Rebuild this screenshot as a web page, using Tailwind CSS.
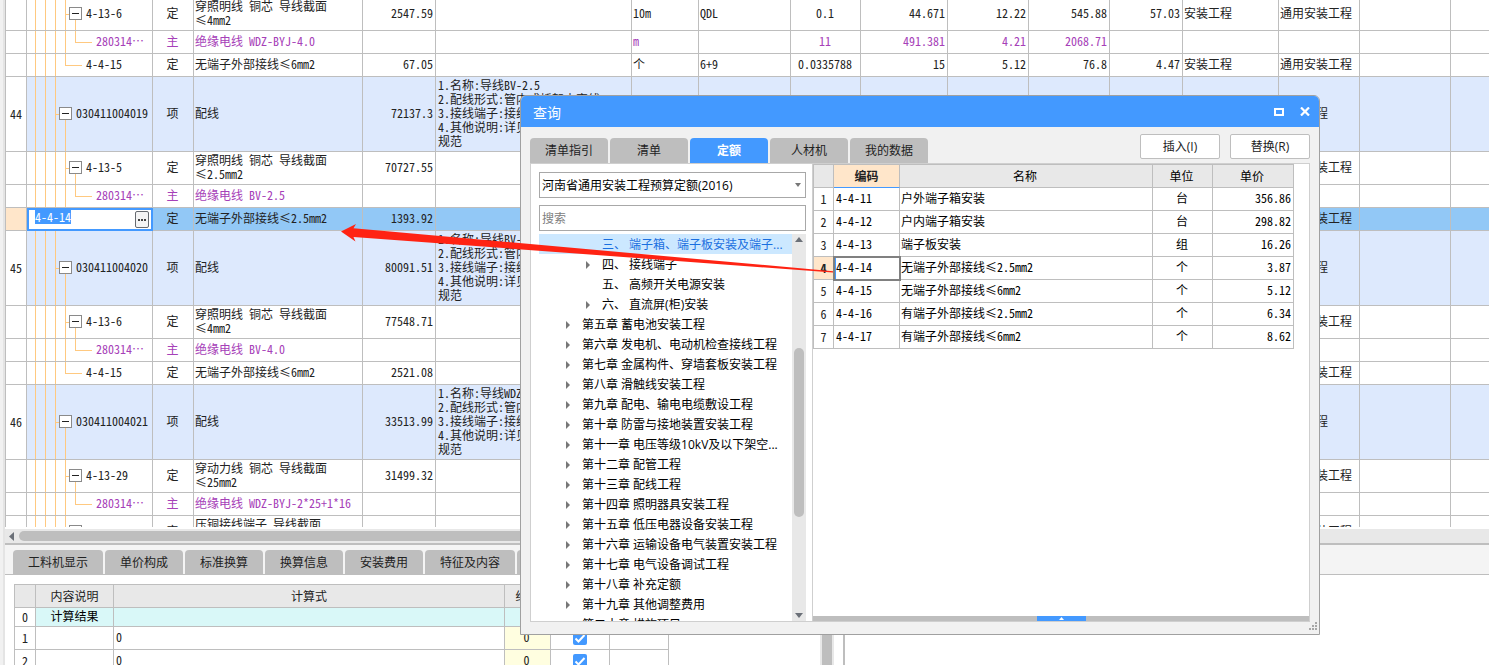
<!DOCTYPE html>
<html lang="zh-CN">
<head>
<meta charset="utf-8">
<title>查询</title>
<script src="https://cdn.jsdelivr.net/npm/@tailwindcss/browser@4"></script>
</head>
<body class="relative h-screen overflow-hidden bg-[#f1f1f1] font-['Open_Sans','Noto_Sans_CJK_SC',sans-serif] text-xs text-[#222222]">

<div class="flex h-full flex-col border-l-[3px] border-[#f1f1f1] bg-white">
  <div class="flex min-h-0 flex-1 flex-col border-l-2 border-[#e4e4e4]">

    <!-- bill of quantities grid -->
    <main class="h-[527px] shrink-0 overflow-hidden">
      <table class="-mt-[2px] w-full table-fixed border-separate border-spacing-0 border-l border-[#bebebe] font-['Noto_Sans_Mono_CJK_SC','Noto_Sans_CJK_SC',monospace] text-xs leading-[14px] whitespace-nowrap">
        <colgroup>
          <col class="w-[21px]"><col class="w-[126px]"><col class="w-[41px]"><col class="w-[169px]"><col class="w-[73px]"><col class="w-[196px]"><col class="w-[67px]"><col class="w-[92px]"><col class="w-[70px]"><col class="w-[87px]"><col class="w-[81px]"><col class="w-[81px]"><col class="w-[73px]"><col class="w-[96px]"><col class="w-[81px]"><col class="w-[91px]"><col>
        </colgroup>
        <tbody id="bill"></tbody>
      </table>
    </main>

    <!-- horizontal scrollbar -->
    <div class="mt-[2px] flex h-[14px] shrink-0 items-center bg-[#e8e8e8]">
      <svg class="ml-[4px] h-[9px] w-[5px]" viewBox="0 0 5 9"><path d="M5 0v9L0 4.500z" fill="#6b7078"/></svg>
      <div class="ml-[5px] h-[10px] w-3/5 rounded-full bg-[#bebebe]"></div>
    </div>
    <div class="h-[2px] shrink-0 bg-[#bebebe]"></div>

    <nav class="flex h-[30px] shrink-0 items-end gap-[2px] border-b border-[#bebebe] bg-[#f4f4f4] pl-[8px]">
      <button class="h-[24px] w-[90px] rounded-t-sm bg-[#bebebe] pt-[2px]">工料机显示</button>
      <button class="h-[24px] w-[78px] rounded-t-sm bg-[#bebebe] pt-[2px]">单价构成</button>
      <button class="h-[24px] w-[78px] rounded-t-sm bg-[#bebebe] pt-[2px]">标准换算</button>
      <button class="h-[24px] w-[78px] rounded-t-sm bg-[#bebebe] pt-[2px]">换算信息</button>
      <button class="h-[24px] w-[78px] rounded-t-sm bg-[#bebebe] pt-[2px]">安装费用</button>
      <button class="h-[24px] w-[90px] rounded-t-sm bg-[#bebebe] pt-[2px]">特征及内容</button>
      <button aria-label="工程量明细" class="h-[24px] w-[90px] rounded-t-sm bg-[#bebebe]"></button>
    </nav>

    <section class="flex min-h-0 flex-1 overflow-hidden">
      <div class="w-[815px] shrink-0 pt-[9px] pl-[9px]">
        <table class="w-[655px] table-fixed border-separate border-spacing-0 border-t border-l border-[#bebebe] font-['Noto_Sans_Mono_CJK_SC','Noto_Sans_CJK_SC',monospace] leading-[14px]">
          <colgroup><col class="w-[21px]"><col class="w-[78px]"><col class="w-[391px]"><col class="w-[46px]"><col class="w-[59px]"><col class="w-[59px]"></colgroup>
          <thead>
            <tr class="h-[23px] bg-[#e8e8e8]">
              <th class="border-r border-b border-[#bebebe]"></th>
              <th class="border-r border-b border-[#bebebe] p-0 font-normal">内容说明</th>
              <th class="border-r border-b border-[#bebebe] p-0 font-normal">计算式</th>
              <th class="border-r border-b border-[#bebebe] p-0 font-normal">结果</th>
              <th class="border-r border-b border-[#bebebe]"></th>
              <th class="border-r border-b border-[#bebebe]"></th>
            </tr>
          </thead>
          <tbody>
            <tr class="h-[19px] bg-[#d9f8f8]">
              <td class="border-r border-b border-[#bebebe] bg-white p-0 text-center">0</td>
              <td class="border-r border-b border-[#bebebe] p-0 pb-[2px] text-center text-black">计算结果</td>
              <td class="border-r border-b border-[#bebebe]"></td><td class="border-r border-b border-[#bebebe]"></td><td class="border-r border-b border-[#bebebe]"></td><td class="border-r border-b border-[#bebebe]"></td>
            </tr>
            <tr class="h-[23px]">
              <td class="border-r border-b border-[#bebebe] p-0 text-center">1</td>
              <td class="border-r border-b border-[#bebebe]"></td>
              <td class="border-r border-b border-[#bebebe] p-0 pb-[2px] pl-[2px]">0</td>
              <td class="border-r border-b border-[#bebebe] bg-[#fffee0] p-0 pr-[2px] pb-[2px] text-center">0</td>
              <td class="border-r border-b border-[#bebebe] p-0"><div class="mx-auto grid size-[14px]"><input type="checkbox" checked aria-label="选项 1" class="col-start-1 row-start-1 size-[14px] appearance-none rounded-xs bg-[#4399ff]"><svg class="pointer-events-none col-start-1 row-start-1 size-[14px]" viewBox="0 0 14 14"><path d="M2.500 7.500l3 3 6-6.500" fill="none" stroke="#fff" stroke-width="2"/></svg></div></td>
              <td class="border-r border-b border-[#bebebe]"></td>
            </tr>
            <tr class="h-[23px]">
              <td class="border-r border-b border-[#bebebe] p-0 text-center">2</td>
              <td class="border-r border-b border-[#bebebe]"></td>
              <td class="border-r border-b border-[#bebebe] p-0 pb-[2px] pl-[2px]">0</td>
              <td class="border-r border-b border-[#bebebe] bg-[#fffee0] p-0 pr-[2px] pb-[2px] text-center">0</td>
              <td class="border-r border-b border-[#bebebe] p-0"><div class="mx-auto grid size-[14px]"><input type="checkbox" checked aria-label="选项 2" class="col-start-1 row-start-1 size-[14px] appearance-none rounded-xs bg-[#4399ff]"><svg class="pointer-events-none col-start-1 row-start-1 size-[14px]" viewBox="0 0 14 14"><path d="M2.500 7.500l3 3 6-6.500" fill="none" stroke="#fff" stroke-width="2"/></svg></div></td>
              <td class="border-r border-b border-[#bebebe]"></td>
            </tr>
          </tbody>
        </table>
      </div>
      <div class="w-[14px] shrink-0 bg-[#e8e8e8] px-[2px]"><div class="h-full bg-[#bebebe]"></div></div>
      <div class="ml-[9px] w-[2px] shrink-0 bg-[#bebebe]"></div>
    </section>
  </div>
</div>

<!-- query dialog -->
<div role="dialog" aria-label="查询" class="absolute top-[95px] left-[520px] flex h-[540px] w-[800px] flex-col overflow-hidden rounded-t-md border border-[#a0a0a0] bg-[#f1f1f1]">
  <header class="flex h-[31px] shrink-0 items-center bg-[#4399ff] pr-[9px] pl-[12px] text-white">
    <h1 class="flex-1 pt-[2px] text-sm">查询</h1>
    <button aria-label="最大化" class="mr-[16px]"><svg class="h-[8px] w-[10px]" viewBox="0 0 10 8"><path d="M1 1h8v6H1z" fill="none" stroke="#fff" stroke-width="2"/></svg></button>
    <button aria-label="关闭"><svg class="h-[9px] w-[10px]" viewBox="0 0 10 9"><path d="M1 .5l8 8M9 .5l-8 8" stroke="#fff" stroke-width="2.200"/></svg></button>
  </header>
  <div class="flex h-[36px] shrink-0 items-end gap-[2px] px-[9px]">
    <button class="h-[25px] w-[78px] rounded-t-sm bg-[#bebebe]">清单指引</button>
    <button class="h-[25px] w-[78px] rounded-t-sm bg-[#bebebe]">清单</button>
    <button class="h-[25px] w-[78px] rounded-t-sm bg-[#4399ff] font-bold text-white">定额</button>
    <button class="h-[25px] w-[78px] rounded-t-sm bg-[#bebebe]">人材机</button>
    <button class="h-[25px] w-[78px] rounded-t-sm bg-[#bebebe]">我的数据</button>
    <div class="mb-[4px] ml-auto flex gap-[10px]">
      <button class="h-[25px] w-[80px] rounded-xs border border-[#bebebe] bg-white">插入(I)</button>
      <button class="h-[25px] w-[80px] rounded-xs border border-[#bebebe] bg-white">替换(R)</button>
    </div>
  </div>

  <div class="mx-[9px] mb-[12px] flex min-h-0 flex-1 border border-[#cfcfcf] bg-white text-black">
    <div class="flex w-[281px] shrink-0 flex-col pt-[8px] pr-[6px] pl-[8px]">
      <div class="relative">
        <select aria-label="定额库" class="block h-[26px] w-full appearance-none border border-[#a8a8a8] bg-white pt-[2px] pl-[2px]"><option>河南省通用安装工程预算定额(2016)</option></select>
        <svg class="pointer-events-none absolute top-[11px] right-[5px] h-[4px] w-[6px]" viewBox="0 0 6 4"><path d="M0 0h6L3 4z" fill="#777"/></svg>
      </div>
      <input type="search" placeholder="搜索" aria-label="搜索" class="mt-[7px] block h-[26px] w-full border border-[#a8a8a8] bg-white pl-[2px] placeholder:text-[#808080]">
      <div class="mt-[3px] flex min-h-0 flex-1">
        <ul id="tree" role="tree" class="min-w-0 flex-1 overflow-hidden leading-[18px] whitespace-nowrap"></ul>
        <div class="flex w-[14px] shrink-0 flex-col items-center justify-between bg-[#e8e8e8] py-[3px]">
          <svg class="h-[5px] w-[8px]" viewBox="0 0 8 5"><path d="M0 5h8L4 0z" fill="#6b7078"/></svg>
          <div class="mt-[9px] h-[169px] w-[10px] rounded-full bg-[#bebebe]"></div>
          <svg class="h-[5px] w-[8px]" viewBox="0 0 8 5"><path d="M0 0h8L4 5z" fill="#6b7078"/></svg>
        </div>
      </div>
    </div>

    <div class="flex min-w-0 flex-1 flex-col border-l border-[#cfcfcf]">
      <div class="flex-1 pr-[15px]">
        <table class="w-full table-fixed border-separate border-spacing-0 border-t border-l border-[#bebebe] font-['Noto_Sans_Mono_CJK_SC','Noto_Sans_CJK_SC',monospace] leading-[14px] whitespace-nowrap">
          <colgroup><col class="w-[20px]"><col class="w-[66px]"><col><col class="w-[60px]"><col class="w-[81px]"></colgroup>
          <thead>
            <tr class="h-[23px] bg-[#e8e8e8]">
              <th class="border-r border-b border-[#bebebe]"></th>
              <th class="border-r border-b border-r-[#bebebe] border-b-[#4399ff] bg-[#ffe6ca] p-0 font-bold text-[#222222]">编码</th>
              <th class="border-r border-b border-[#bebebe] p-0 pr-[2px] font-normal">名称</th>
              <th class="border-r border-b border-[#bebebe] p-0 pr-[2px] font-normal">单位</th>
              <th class="border-r border-b border-[#bebebe] p-0 pr-[2px] font-normal">单价</th>
            </tr>
          </thead>
          <tbody id="quota"></tbody>
        </table>
      </div>
      <div class="flex h-[5px] shrink-0 justify-center bg-[#bebebe]">
        <button aria-label="展开" class="flex w-[49px] items-center justify-center bg-[#4399ff]"><svg class="h-[3px] w-[5px]" viewBox="0 0 5 3"><path d="M0 3h5L2.500 0z" fill="#fff"/></svg></button>
      </div>
    </div>
  </div>
  <svg class="absolute right-[2px] bottom-[4px] size-[8px]" viewBox="0 0 8 8"><path d="M6 0h2v2H6zM3 3h2v2H3zM6 3h2v2H6zM0 6h2v2H0zM3 6h2v2H3zM6 6h2v2H6z" fill="#a8a8a8"/></svg>
</div>

<!-- annotation arrow -->
<svg class="pointer-events-none absolute top-[220px] left-[340px] h-[60px] w-[500px]" viewBox="340 220 500 60"><path d="M341 231.500L356 224 353.500 228.200 833 271.200V272.500L353.500 237 355.500 241.500z" fill="#ff2313"/></svg>

<script>
const cell = 'overflow-hidden border-r border-b border-[#bebebe] p-0 px-[2px] pb-[2px]';
const tight = 'overflow-hidden border-r border-b border-[#bebebe] p-0 pr-[2px] pb-[2px] pl-px';
const plain = 'h-[23px]', tall = 'h-[33px]', item = 'h-[75px] bg-[#dde9fd]', active = 'h-[23px] bg-[#92c8f6]';
const wire = '穿照明线 铜芯 导线截面<br>';
const note = (w) => `1.名称:导线${w}<br>2.配线形式:管内或桥架内穿线<br>3.接线端子:接线<br>4.其他说明:详见<br>规范`;

// [row number, kind, code, category, name, quantity, description, unit, expression, content, amount, price, total, rate, major, profession]
const rows = [
  ['', 'parent', '4-13-6', '定', wire + '≤4mm2', '2547.59', '', '10m', 'QDL', '0.1', '44.671', '12.22', '545.88', '57.03', '安装工程', '通用安装工程'],
  ['', 'leaf', '280314⋯', '主', '绝缘电线 WDZ-BYJ-4.0', '', '', 'm', '', '11', '491.381', '4.21', '2068.71', '', '', ''],
  ['', 'last', '4-4-15', '定', '无端子外部接线≤6mm2', '67.05', '', '个', '6+9', '0.0335788', '15', '5.12', '76.8', '4.47', '安装工程', '通用安装工程'],
  ['44', 'item', '030411004019', '项', '配线', '72137.3', note('BV-2.5'), '', '', '', '', '', '', '', '', '安装工程'],
  ['', 'parent', '4-13-5', '定', wire + '≤2.5mm2', '70727.55', '', '', '', '', '', '', '', '', '', '通用安装工程'],
  ['', 'leaf', '280314⋯', '主', '绝缘电线 BV-2.5', '', '', '', '', '', '', '', '', '', '', ''],
  ['', 'edit', '4-4-14', '定', '无端子外部接线≤2.5mm2', '1393.92', '', '', '', '', '', '', '', '', '', '通用安装工程'],
  ['45', 'item', '030411004020', '项', '配线', '80091.51', note('BV-4.0'), '', '', '', '', '', '', '', '', '安装工程'],
  ['', 'parent', '4-13-6', '定', wire + '≤4mm2', '77548.71', '', '', '', '', '', '', '', '', '', '通用安装工程'],
  ['', 'leaf', '280314⋯', '主', '绝缘电线 BV-4.0', '', '', '', '', '', '', '', '', '', '', ''],
  ['', 'last', '4-4-15', '定', '无端子外部接线≤6mm2', '2521.08', '', '', '', '', '', '', '', '', '', '通用安装工程'],
  ['46', 'item', '030411004021', '项', '配线', '33513.99', note('WDZ-BYJ'), '', '', '', '', '', '', '', '', '安装工程'],
  ['', 'parent', '4-13-29', '定', '穿动力线 铜芯 导线截面<br>≤25mm2', '31499.32', '', '', '', '', '', '', '', '', '', '通用安装工程'],
  ['', 'leaf', '280314⋯', '主', '绝缘电线 WDZ-BYJ-2*25+1*16', '', '', '', '', '', '', '', '', '', '', ''],
  ['', 'parent', '', '定', '压铜接线端子 导线截面<br>&nbsp;', '', '', '', '', '', '', '', '', '', '', '通用安装工程'],
];
const v = (x, y, h) => `<rect x="${x}" y="${y}" width="1" height="${h}"/>`;
const hz = (x, w) => `<rect x="${x}" y="50%" width="${w}" height="1"/>`;
const guides = {
  item: v(38, '50%', '50%') + hz(28, 5),
  parent: v(38, 0, '100%') + hz(38, 5) + v(48, '50%', '50%'),
  leaf: v(38, 0, '100%') + v(48, 0, '50%') + hz(48, 17),
  last: v(38, 0, '50%') + hz(38, 17),
};
const indent = { item: 'pl-[32px]', parent: 'pl-[42px]', leaf: 'pl-[69px]', last: 'pl-[59px]' };
const toggle = '<button aria-label="折叠" class="mr-[4px] flex size-[13px] shrink-0 items-center justify-center border border-[#8a8a8a] bg-white"><span class="h-px w-[7px] bg-[#222222]"></span></button>';

function codeCell(kind, code) {
  if (kind === 'edit') return `<td class="border-r border-b border-[#4399ff] bg-white p-0"><div class="flex h-[22px] justify-between border-2 border-r border-b border-[#4399ff] pr-[2px] pl-[6px]"><input aria-label="编码" value="${code}" class="h-[14px] w-[36px] bg-[#4399ff] text-white outline-none"><button aria-label="选择" class="mt-px flex h-[17px] w-[14px] items-center justify-center gap-px rounded-xs border border-[#666a70] bg-[#f4f4f4]"><span class="size-[2px] bg-[#444444]"></span><span class="size-[2px] bg-[#444444]"></span><span class="size-[2px] bg-[#444444]"></span></button></div></td>`;
  const box = kind === 'item' || kind === 'parent' ? toggle : '';
  return `<td class="relative border-r border-b border-[#bebebe] p-0 pb-[2px]"><svg class="absolute inset-0 size-full" fill="#ffc980">${v(8, 0, '100%')}${v(18, 0, '100%')}${v(28, 0, '100%')}${guides[kind]}</svg><div class="relative flex items-center ${indent[kind]}">${box}${code}</div></td>`;
}
document.getElementById('bill').innerHTML = rows.map(r => {
  const [no, kind, code, cat, name, qty, desc, ...rest] = r;
  const tr = kind === 'item' ? item : kind === 'parent' ? tall : kind === 'edit' ? active : plain;
  const ink = kind === 'leaf' ? 'text-[#a640b8]' : '';
  const align = ['text-left', 'text-left', 'text-center', 'text-right', 'text-right', 'text-right', 'text-right', 'text-left', 'text-left'];
  return `<tr class="${tr} ${ink}">
    <td class="border-r border-b border-[#bebebe] p-0 text-center ${kind === 'edit' ? 'bg-[#ffe6ca]' : 'bg-white'}">${no}</td>
    ${codeCell(kind, code)}
    <td class="${tight} text-center">${cat}</td><td class="${tight}">${name}</td><td class="${cell} text-right">${qty}</td><td class="${cell}">${desc}</td>
    ${rest.map((t, i) => `<td class="${tight} ${align[i]}">${t}</td>`).join('')}
    <td class="${cell}"></td><td class="border-b border-[#bebebe]"></td></tr>`;
}).join('');

const tree = [
  ['sel', '三、 端子箱、端子板安装及端子...'], ['sub', '四、 接线端子'], ['end', '五、 高频开关电源安装'], ['sub', '六、 直流屏(柜)安装'],
  ['top', '第五章 蓄电池安装工程'], ['top', '第六章 发电机、电动机检查接线工程'], ['top', '第七章 金属构件、穿墙套板安装工程'],
  ['top', '第八章 滑触线安装工程'], ['top', '第九章 配电、输电电缆敷设工程'], ['top', '第十章 防雷与接地装置安装工程'],
  ['top', '第十一章 电压等级10kV及以下架空...'], ['top', '第十二章 配管工程'], ['top', '第十三章 配线工程'], ['top', '第十四章 照明器具安装工程'],
  ['top', '第十五章 低压电器设备安装工程'], ['top', '第十六章 运输设备电气装置安装工程'], ['top', '第十七章 电气设备调试工程'],
  ['top', '第十八章 补充定额'], ['top', '第十九章 其他调整费用'], ['top', '第二十章 措施项目'],
];
const pad = { sel: 'pl-[63px] bg-[#cce8ff] text-[#1a6fe0]', end: 'pl-[63px]', sub: 'pl-[47px]', top: 'pl-[27px]' };
const caret = '<svg class="mr-[12px] h-[8px] w-[4px]" viewBox="0 0 4 8"><path d="M0 0v8l4-4z" fill="#777"/></svg>';
document.getElementById('tree').innerHTML = tree.map(([k, t]) =>
  `<li role="treeitem" class="flex h-[20px] items-center pt-[2px] ${pad[k]}">${k === 'sub' || k === 'top' ? caret : ''}${t}</li>`).join('');

const quota = [
  ['4-4-11', '户外端子箱安装', '台', '356.86'], ['4-4-12', '户内端子箱安装', '台', '298.82'], ['4-4-13', '端子板安装', '组', '16.26'],
  ['4-4-14', '无端子外部接线≤2.5mm2', '个', '3.87'], ['4-4-15', '无端子外部接线≤6mm2', '个', '5.12'],
  ['4-4-16', '有端子外部接线≤2.5mm2', '个', '6.34'], ['4-4-17', '有端子外部接线≤6mm2', '个', '8.62'],
];
document.getElementById('quota').innerHTML = quota.map(([c, n, u, p], i) => `<tr class="h-[23px]">
  <td class="border-r border-b border-[#bebebe] p-0 text-center text-[#222222] ${i === 3 ? 'bg-[#ffe6ca] font-bold' : ''}">${i + 1}</td>
  <td class="border-r border-b border-[#bebebe] p-0 pb-[2px] pl-[2px] ${i === 3 ? 'shadow-[inset_2px_0_0_#4399ff] outline-2 -outline-offset-1 outline-[#808080]' : ''}">${c}</td>
  <td class="${tight}">${n}</td><td class="${tight} text-center">${u}</td><td class="${cell} text-right">${p}</td></tr>`).join('');
</script>
</body>
</html>
